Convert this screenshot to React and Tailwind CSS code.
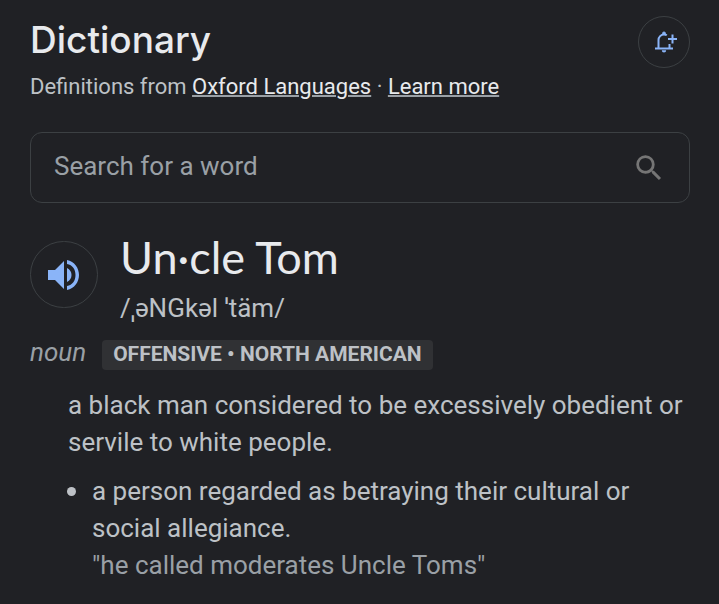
import React, { useState } from 'react';

const BellAddIcon = () => (
    <svg viewBox="0 0 28 28" className="size-7 fill-none stroke-[#8ab4f8] stroke-2" aria-hidden="true">
        <path d="M5 20.5h18" />
        <path d="M8.500 20v-8a5.500 5.500 0 0 1 5.500-5.500c1 0 2 .2 2.800.8M19.500 16v4" />
        <path d="M12.500 5.500a1.500 1.500 0 0 1 3 0z" className="fill-[#8ab4f8] stroke-1" />
        <path d="M11.800 22.300h4.400a2.200 2.200 0 0 1-4.400 0z" className="fill-[#8ab4f8] stroke-none" />
        <path d="M22.500 6.500v9M18 11h9" />
    </svg>
);

const SearchIcon = () => (
    <svg viewBox="0 0 24 24" className="size-[34px] fill-[#757575]" aria-hidden="true">
        <path d="M15.5 14h-.79l-.28-.27A6.47 6.47 0 0 0 16 9.5 6.5 6.5 0 1 0 9.5 16c1.61 0 3.09-.59 4.23-1.57l.27.28v.79l5 4.99L20.49 19l-4.99-5zm-6 0C7.01 14 5 11.99 5 9.5S7.01 5 9.5 5 14 7.01 14 9.5 11.99 14 9.5 14z" />
    </svg>
);

const SpeakerIcon = () => (
    <svg viewBox="0 0 40 40" className="size-10 fill-[#8ab4f8]" aria-hidden="true">
        <path d="M4 15v10h7l9 9V6l-9 9zM23 13v14c3-1.500 4.500-4 4.500-7s-1.500-5.500-4.500-7z" />
        <path d="M23 5v4c5.500 1 8.500 5.500 8.500 11s-3 10-8.500 11v4c7.500-1.500 12-8 12-15s-4.500-13.500-12-15z" />
    </svg>
);

// Stress marks sit tighter in Noto Sans than in Roboto
const Stress = ({ children }) => (
    <span className="font-['Noto_Sans',sans-serif]">{children}</span>
);

const App = () => {
    const [word, setWord] = useState('');

    return (
        <main className="min-h-screen bg-[#202125] pt-4 pr-[29px] pb-5 pl-[30px] font-['Roboto',sans-serif] text-[#bdc1c6]">
            <header className="flex items-start justify-between">
                <div>
                    <h1 className="font-['Inter',sans-serif] text-[37px] leading-12 font-medium text-[#e8eaed]">Dictionary</h1>
                    <p className="mt-2 text-[22px] leading-[30px]">
                        Definitions from{' '}
                        <a href="#oxford" className="text-[#e8eaed] underline decoration-[#9aa0a6] decoration-2">Oxford Languages</a>
                        {' · '}
                        <a href="#about" className="text-[#e8eaed] underline decoration-[#9aa0a6] decoration-2">Learn more</a>
                    </p>
                </div>
                <button
                    type="button"
                    aria-label="Get word alerts"
                    className="flex size-[52px] items-center justify-center rounded-full border border-[#3c4043]"
                >
                    <BellAddIcon />
                </button>
            </header>

            <form
                onSubmit={(e) => e.preventDefault()}
                className="mt-[30px] flex h-[71px] items-center rounded-xl border border-[#3c4043] px-[23px]"
            >
                <input
                    type="text"
                    aria-label="Search for a word"
                    placeholder="Search for a word"
                    value={word}
                    onChange={(e) => setWord(e.target.value)}
                    className="min-w-0 flex-1 bg-transparent pb-[2px] text-[26px] outline-none placeholder:text-[#9aa0a6]"
                />
                <button type="submit" aria-label="Search">
                    <SearchIcon />
                </button>
            </form>

            <section>
                <div className="mt-8 flex gap-[22px]">
                    <button
                        type="button"
                        aria-label="Listen"
                        className="mt-[6px] flex h-[67px] w-[68px] items-center justify-center rounded-full border border-[#3c4043]"
                    >
                        <SpeakerIcon />
                    </button>
                    <div>
                        <h2 className="font-['Lato',sans-serif] text-[45px] leading-11 text-[#e8eaed]">Un·cle Tom</h2>
                        <p className="mt-3 text-[26px] leading-8">
                            /<Stress>ˌ</Stress>əNGkəl <Stress>ˈ</Stress>täm/
                        </p>
                    </div>
                </div>

                <div className="mt-4 flex items-start gap-4">
                    <i className="text-[26px] leading-6 text-[#9aa0a6]">noun</i>
                    <span className="rounded-sm bg-[#303134] px-[11px] pb-[2px] text-[21px] leading-7 font-bold">
                        OFFENSIVE • NORTH AMERICAN
                    </span>
                </div>

                <div className="mt-[17px] pl-[38px] text-[26px] leading-[37px]">
                    <p>a black man considered to be excessively obedient or servile to white people.</p>
                    <ul className="mt-[10px] list-disc pl-6 marker:text-[30px]">
                        <li>
                            a person regarded as betraying their cultural or social allegiance.
                            <p className="text-[#9aa0a6]">"he called moderates Uncle Toms"</p>
                        </li>
                    </ul>
                </div>
            </section>
        </main>
    );
};

export default App;
